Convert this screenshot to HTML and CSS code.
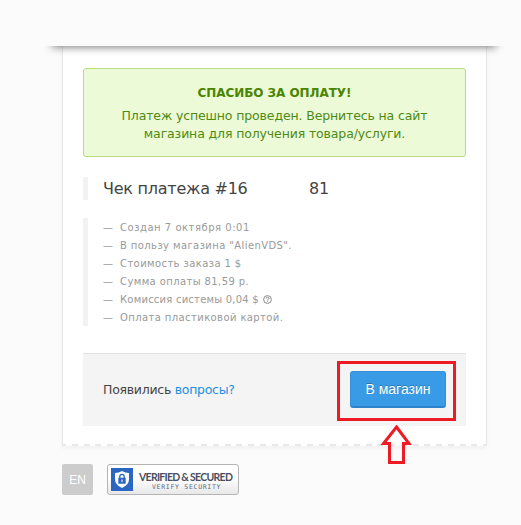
FILE: index.html
```
<!DOCTYPE html>
<html lang="ru">
<head>
<meta charset="utf-8">
<title>Чек платежа</title>
<link rel="stylesheet" href="styles.css">
</head>
<body>
<header class="top"></header>
<div class="slot"><div class="slot-shadow"></div></div>
<main class="receipt">
  <section class="alert">
    <strong class="alert-title">СПАСИБО ЗА ОПЛАТУ!</strong>
    <p>Платеж успешно проведен. Вернитесь на сайт</p>
    <p>магазина для получения товара/услуги.</p>
  </section>
  <h1 class="title"><span class="title-text">Чек платежа #16</span><span>81</span></h1>
  <ul class="details">
    <li class="created">Создан 7 октября 0:01</li>
    <li>В пользу магазина "AlienVDS".</li>
    <li>Стоимость заказа 1 $</li>
    <li>Сумма оплаты 81,59 р.</li>
    <li class="fee">Комиссия системы 0,04 $ <svg class="help" viewBox="0 0 9 9"><circle cx="4.5" cy="4.5" r="3.9"/><path d="M3 3.5Q3.1 2.3 4.5 2.3T6 3.5Q6 4.2 4.6 4.8V5.4M4.6 6.2V7"/></svg></li>
    <li>Оплата пластиковой картой.</li>
  </ul>
  <footer class="actions">
    <p class="ask">Появились <a href="#">вопросы?</a></p>
    <div class="action">
      <a class="button" href="#">В магазин</a>
      <div class="mark"></div>
      <svg class="arrow" viewBox="0 0 32 40"><path d="M16.500 2L29 18.500H23.500V37.500H9.500V18.500H3.500Z"/></svg>
    </div>
  </footer>
</main>
<div class="tear"></div>
<div class="bottom">
  <a class="lang" href="#">EN</a>
  <div class="badge">
    <svg class="shield" viewBox="0 0 22 23"><rect width="22" height="23" fill="#2b67c2"/><path d="M11 3Q14 5 18 5V11Q18 17 11 20Q4 17 4 11V5Q8 5 11 3Z" fill="#fff"/><path d="M8.800 10V8.500a2.200 2.200 0 0 1 4.400 0V10" fill="none" stroke="#2b67c2" stroke-width="1.300"/><rect x="7.300" y="9.800" width="7.400" height="6" rx=".6" fill="#2b67c2"/><path d="M11 11.500V14" stroke="#fff" stroke-width="1.100"/></svg>
    <div class="badge-text"><b>VERIFIED &amp; SECURED</b><small>VERIFY SECURITY</small></div>
  </div>
</div>
</body>
</html>
```

FILE: styles.css
```
* { box-sizing: border-box; }
body {
  margin: 0;
  width: 521px;
  height: 525px;
  overflow: hidden;
  background: #fbfbfb;
  color: #444;
  font: 13px/18px Verdana, "DejaVu Sans", sans-serif;
}
p, h1, ul { margin: 0; padding: 0; }
a { color: #1e8fe1; text-decoration: none; }
.top { height: 46px; }
.slot { position: relative; height: 0; }
.slot-shadow {
  position: absolute;
  left: 40px;
  top: 0;
  width: 470px;
  height: 16px;
  overflow: hidden;
}
.slot-shadow::before {
  content: "";
  position: absolute;
  left: 13px;
  right: 15px;
  top: -10px;
  height: 10px;
  box-shadow: 0 0 9px 1px #777;
}
.receipt {
  width: 425px;
  height: 398px;
  margin-left: 62px;
  padding: 22px 20px 0;
  background: #fff;
  border: solid #e8e8e8;
  border-width: 0 1px;
  box-shadow: 0 2px 4px rgba(0, 0, 0, .04);
}
.alert {
  height: 89px;
  padding-top: 15px;
  text-align: center;
  color: #4f8a10;
  background: #ecfad8;
  border: 1px solid #b9dc7e;
  border-radius: 3px;
  font-size: 12.500px;
  letter-spacing: -.13px;
  white-space: nowrap;
}
.alert-title {
  display: block;
  margin-bottom: 5px;
  font-size: 12px;
  line-height: 18px;
  letter-spacing: -.05px;
  color: #4b8500;
}
.title {
  display: flex;
  height: 23px;
  margin-top: 20px;
  padding-left: 15px;
  border-left: 5px solid #f2f2f2;
  font-size: 16px;
  font-weight: 400;
  line-height: 24px;
  letter-spacing: -.25px;
  white-space: nowrap;
}
.title-text { width: 206px; }
.details {
  height: 108px;
  margin-top: 18px;
  padding: 1px 0 0 15px;
  border-left: 5px solid #f2f2f2;
  color: #999;
  font-size: 10px;
  line-height: 18px;
  letter-spacing: .4px;
  list-style: none;
  white-space: nowrap;
}
.details li { display: flex; }
.details .created { letter-spacing: .52px; }
.details .fee { letter-spacing: .22px; }
.details li::before { content: "—"; width: 17px; flex: none; }
.help {
  width: 9px;
  height: 9px;
  margin: 4px 0 0 4px;
  fill: none;
  stroke: #888;
  stroke-width: 1;
}
.actions {
  display: flex;
  justify-content: space-between;
  height: 73px;
  margin-top: 27px;
  padding: 17px 20px 0;
  background: #f4f4f4;
  border-top: 1px solid #e2e2e2;
}
.ask { margin-top: 10px; font-size: 12.500px; letter-spacing: -.27px; }
.action { position: relative; width: 96px; height: 37px; }
.button {
  display: block;
  height: 37px;
  color: #fff;
  background: #399be5;
  border: 1px solid #338fd8;
  border-bottom: 2px solid #2d83cb;
  border-radius: 3px;
  font: 14px/35px "Liberation Sans", Arial, sans-serif;
  text-align: center;
  text-shadow: 0 -1px 0 rgba(0, 0, 0, .25);
}
.mark {
  position: absolute;
  left: -13px;
  top: -10px;
  width: 119px;
  height: 60px;
  border: 3px solid #ed1c24;
}
.arrow {
  position: absolute;
  left: 30px;
  top: 54px;
  width: 32px;
  height: 40px;
  fill: none;
  stroke: #ed1c24;
  stroke-width: 3;
}
.tear {
  width: 425px;
  height: 2px;
  margin-left: 62px;
  background: repeating-linear-gradient(90deg, #e8e8e8 0 4px, #fff 4px 9.800px, #e8e8e8 9.800px 11.750px);
  box-shadow: 0 2px 4px rgba(0, 0, 0, .06);
}
.bottom { display: flex; margin: 18px 0 0 62px; gap: 14px; }
.lang {
  width: 31px;
  height: 31px;
  background: #ccc;
  border-radius: 2px;
  color: #fff;
  font: 12px/32px "Liberation Sans", Arial, sans-serif;
  text-align: center;
}
.badge {
  display: flex;
  width: 132px;
  height: 31px;
  padding: 3px 0 0 3px;
  gap: 6px;
  background: linear-gradient(#fff 45%, #e8e8e8);
  border: 1px solid #b5b5b5;
  border-radius: 3px;
}
.shield { width: 22px; height: 23px; }
.badge-text { white-space: nowrap; }
.badge b {
  display: block;
  padding-top: 3px;
  color: #4a4f60;
  font: 700 10.500px/12px Lato, sans-serif;
  letter-spacing: -.72px;
}
.badge small {
  display: block;
  padding-left: 13px;
  color: #666b80;
  font: 6.500px/8px "DejaVu Sans Mono", monospace;
  letter-spacing: .7px;
}
```
